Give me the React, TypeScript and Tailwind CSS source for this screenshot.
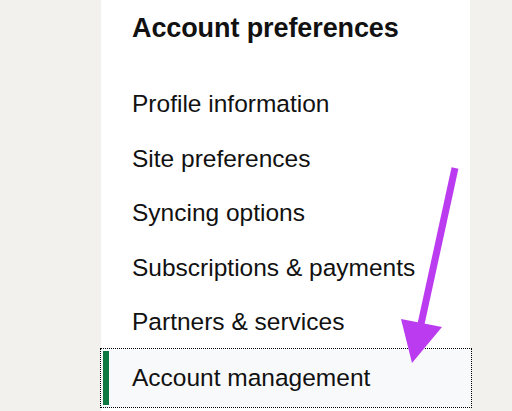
const items = [
  'Profile information',
  'Site preferences',
  'Syncing options',
  'Subscriptions & payments',
  'Partners & services',
];

export default function App() {
  return (
    <div
      className="relative flex h-[411px] w-[512px] overflow-hidden bg-[#f2f1ee] text-[#111]"
      style={{ fontFamily: '"Liberation Sans", Arial, sans-serif' }}
    >
      {/* Settings panel */}
      <aside className="ml-[101px] flex w-[369px] flex-col bg-white pt-[12px]">
        <h2 className="pl-[31px] text-[27px] font-bold leading-[32px] tracking-[-0.1px]">
          Account preferences
        </h2>

        <nav className="mt-[32px] flex flex-col">
          {items.map((label) => (
            <a key={label} href="#" className="h-[54.6px] pl-[31px] text-[24.5px] leading-[55px]">
              {label}
            </a>
          ))}
          <a
            href="#"
            className="mr-[-1px] flex h-[58px] bg-[#f8f9fb] py-[2px] pl-[2px] outline outline-1 outline-dotted outline-black"
          >
            <span className="w-[6px] bg-[#0e7a40]" />
            <span className="pl-[23px] text-[24.5px] leading-[54px]">Account management</span>
          </a>
        </nav>
      </aside>

      {/* Annotation arrow */}
      <svg className="pointer-events-none absolute left-0 top-0" width="512" height="411" viewBox="0 0 512 411">
        <line x1="455" y1="168" x2="421" y2="324" stroke="#bb3bf0" strokeWidth="7" strokeLinecap="butt" />
        <polygon points="401,319 442,327 412,363" fill="#bb3bf0" />
      </svg>
    </div>
  );
}
